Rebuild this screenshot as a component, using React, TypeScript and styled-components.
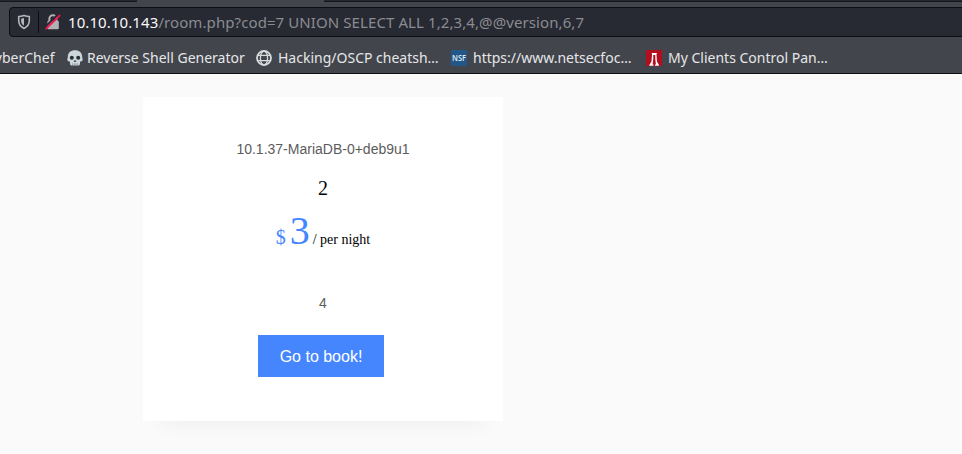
import React from "react";
import styled, { createGlobalStyle } from "styled-components";

const GlobalStyle = createGlobalStyle`
  * { box-sizing: border-box; }
  body { margin: 0; background: #fafafa; overflow: hidden; }
`;

const Window = styled.div`
  width: 962px;
  height: 454px;
  overflow: hidden;
  background: #fafafa;
`;

const Chrome = styled.header`
  height: 74px;
  background: #42454c;
  border-bottom: 1px solid #0d0f13;
  font-family: "Noto Sans", sans-serif;
  overflow: hidden;
`;

const TabStrip = styled.div`
  display: flex;
  height: 2px;
`;

const Tab = styled.div<{ $width?: number; $active?: boolean }>`
  flex: ${(p) => (p.$width ? `0 0 ${p.$width}px` : "1")};
  background: ${(p) => (p.$active ? "#42454c" : "#252731")};
  border-bottom: 1px solid ${(p) => (p.$active ? "#42454c" : "#15171d")};
`;

const UrlBar = styled.div`
  display: flex;
  align-items: center;
  height: 30px;
  margin: 5px -4px 0 9px;
  background: #272933;
  border: 1px solid #0c0e13;
  border-radius: 4px;
`;

const IconSlot = styled.span<{ $width: number; $height: number; $left: number }>`
  display: flex;
  flex: none;
  width: ${(p) => p.$width}px;
  height: ${(p) => p.$height}px;
  margin-left: ${(p) => p.$left}px;
`;

const Divider = styled.span`
  flex: none;
  width: 1px;
  height: 22px;
  margin-left: 7px;
  background: #0c0e13;
`;

const Address = styled.span`
  margin-left: 7px;
  font-size: 15px;
  line-height: 20px;
  letter-spacing: 0.09px;
  white-space: pre;
  color: #8b8c91;
`;

const Host = styled.span`
  color: #f9f9fa;
`;

const BookmarksBar = styled.nav`
  display: flex;
  align-items: center;
  height: 36px;
  padding-top: 5px;
  overflow: hidden;
`;

const Bookmark = styled.a<{ $width: number; $shift?: number; $gap?: number }>`
  display: flex;
  flex: none;
  align-items: center;
  gap: ${(p) => p.$gap ?? 6}px;
  width: ${(p) => p.$width}px;
  margin-left: ${(p) => p.$shift ?? 0}px;
  font-size: 14px;
  line-height: 20px;
  white-space: nowrap;
  color: #e6e7e8;
`;

const Page = styled.main`
  padding: 23px 0 0 143px;
`;

const Card = styled.article`
  display: flex;
  flex-direction: column;
  align-items: center;
  width: 360px;
  height: 324px;
  padding-top: 42px;
  background: #fff;
  box-shadow: 0 20px 20px -18px rgba(0, 0, 0, 0.05);
`;

const Note = styled.p`
  margin: 0;
  font: 14px/20px "Liberation Sans", Arial, sans-serif;
  color: #5c5c5c;
`;

const Title = styled.h3`
  margin: 17px 0 0;
  font: 400 20px/24px "Liberation Serif", "Times New Roman", serif;
  color: #000;
`;

const Price = styled.p`
  display: flex;
  align-items: baseline;
  height: 48px;
  margin: 7px 0 0;
  font: 14px/48px "Liberation Serif", "Times New Roman", serif;
  white-space: pre;
  color: #000;
`;

const Currency = styled.sup`
  font-size: 20px;
  line-height: 48px;
  vertical-align: baseline;
  color: #4586ff;
`;

const Amount = styled.span`
  margin: 0 3px 0 4px;
  font-size: 40px;
  color: #4586ff;
`;

const Description = styled(Note)`
  margin-top: 38px;
`;

const BookButton = styled.a`
  width: 126px;
  height: 42px;
  margin: 22px 4px 0 0;
  background: #4586ff;
  color: #fff;
  font: 16px/44px "Liberation Sans", Arial, sans-serif;
  text-align: center;
`;

const ShieldIcon = () => (
  <svg width="14" height="16" viewBox="0 0 14 16">
    <path d="M7 1.4C9 2 10.7 2.4 12.3 2.5v4.1c0 3.6-2 6.3-5.3 7.9-3.3-1.6-5.3-4.3-5.3-7.9V2.5C3.3 2.4 5 2 7 1.4Z" fill="none" stroke="#b5b6b9" strokeWidth="1.6" strokeLinejoin="round" />
    <path d="M7 4v7.8C5.1 10.6 4.1 9 4.1 6.8V4.7Z" fill="#b5b6b9" />
  </svg>
);

const InsecureLockIcon = () => (
  <svg width="16" height="16" viewBox="0 0 16 16">
    <path d="M4.4 7V4.8a3.5 3.5 0 0 1 7 0V7" fill="none" stroke="#b1b2b5" strokeWidth="2" />
    <rect x="2.4" y="6.8" width="11.4" height="8.5" rx="1" fill="#b1b2b5" />
    <path d="M0 13.1 13.2.2" stroke="#272933" strokeWidth="2" />
    <path d="M1.2 14.6 14.5 1.6" stroke="#f5144d" strokeWidth="1.9" strokeLinecap="round" />
  </svg>
);

const SkullIcon = () => (
  <svg width="16" height="16" viewBox="0 0 16 16">
    <path d="M8 .3c4.4 0 7.2 2.7 7.2 6.8 0 1 .5 1.6.5 2.5 0 1.4-1.2 2.1-2.7 2.1v2.1c0 1.1-.8 1.8-1.8 1.8H4.8C3.8 15.6 3 14.9 3 13.8v-2.1C1.5 11.7.3 11 .3 9.6c0-.9.5-1.5.5-2.5C.8 3 3.6.3 8 .3Z" fill="#ccd6dd" />
    <circle cx="4.8" cy="7.8" r="2" fill="#292f33" />
    <circle cx="11.2" cy="7.8" r="2" fill="#292f33" />
    <path d="M7.2 10.4h1.6l.5 1.4H6.7Z" fill="#292f33" />
    <path d="M5.8 13.4v2.3M8 13.4v2.3M10.2 13.4v2.3" stroke="#66757f" strokeWidth=".7" />
  </svg>
);

const GlobeIcon = () => (
  <svg width="16" height="16" viewBox="0 0 16 16" fill="none" stroke="#d9dadb">
    <circle cx="8" cy="8" r="7" strokeWidth="1.8" />
    <ellipse cx="8" cy="8" rx="3.6" ry="7" strokeWidth="1.3" />
    <path d="M1.8 5.3h12.4M1.8 10.7h12.4" strokeWidth="1.3" />
  </svg>
);

const NsfIcon = () => (
  <svg width="16" height="16" viewBox="0 0 16 16">
    <rect width="16" height="16" rx="1" fill="#235789" />
    <text x="8" y="11.2" textAnchor="middle" textLength="14" lengthAdjust="spacingAndGlyphs" fontFamily="Noto Sans, sans-serif" fontSize="9" fontWeight="600" fill="#dce7f1">NSF</text>
  </svg>
);

const ControlPanelIcon = () => (
  <svg width="16" height="16" viewBox="0 0 16 16">
    <rect width="16" height="16" fill="#b30d20" />
    <path d="M5.8 3h5v1.2h-.4l.6 7.5 1.9 3v1.1H9v-1.2h.9L9.3 8.8V5H7.3v3.8l-.7 5.8h.9v1.2H3.4v-1.1l2-3 .7-7.5h-.3Z" fill="#fff" />
  </svg>
);

export default function App() {
  return (
    <Window>
      <GlobalStyle />
      <Chrome>
        <TabStrip>
          <Tab $width={137} />
          <Tab $width={187} $active />
          <Tab />
        </TabStrip>
        <UrlBar>
          <IconSlot $width={14} $height={16} $left={7}><ShieldIcon /></IconSlot>
          <Divider />
          <IconSlot $width={16} $height={16} $left={6}><InsecureLockIcon /></IconSlot>
          <Address><Host>10.10.10.143</Host>/room.php?cod=7 UNION SELECT ALL 1,2,3,4,@@version,6,7</Address>
        </UrlBar>
        <BookmarksBar>
          <Bookmark $width={81} $shift={-14}>CyberChef</Bookmark>
          <Bookmark $width={189} $gap={4}><SkullIcon />Reverse Shell Generator</Bookmark>
          <Bookmark $width={195}><GlobeIcon />Hacking/OSCP cheatsh…</Bookmark>
          <Bookmark $width={195}><NsfIcon />https://www.netsecfoc…</Bookmark>
          <Bookmark $width={190}><ControlPanelIcon />My Clients Control Pan…</Bookmark>
        </BookmarksBar>
      </Chrome>
      <Page>
        <Card>
          <Note>10.1.37-MariaDB-0+deb9u1</Note>
          <Title>2</Title>
          <Price><Currency>$</Currency><Amount>3</Amount>/ per night</Price>
          <Description>4</Description>
          <BookButton>Go to book!</BookButton>
        </Card>
      </Page>
    </Window>
  );
}
